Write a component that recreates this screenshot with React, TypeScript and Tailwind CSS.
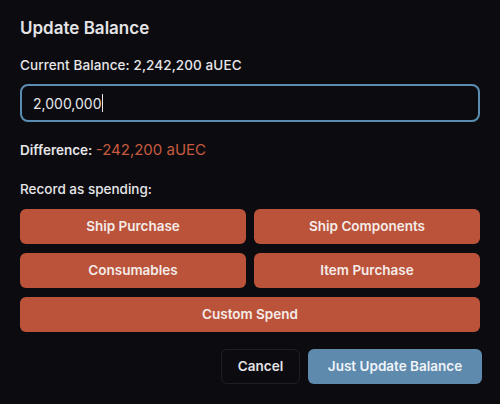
import React from "react";

const spendOptions = ["Ship Purchase", "Ship Components", "Consumables", "Item Purchase"];

export default function App() {
	return (
		<div
			className="w-[500px] h-[404px] bg-[#0c0c10] text-[#e6e6e8] px-5 pt-[17px]"
			style={{ fontFamily: "Inter, 'Liberation Sans', sans-serif" }}
		>
			<h2 className="text-[17px] font-semibold leading-[22px] text-[#e4e4e7]">Update Balance</h2>

			<div className="mt-[17px] text-[13.5px] font-medium leading-[18px] tracking-[0.1px]">
				Current Balance: 2,242,200 aUEC
			</div>

			<div className="mt-[10px] h-[38px] rounded-lg border-2 border-[#5a8db2] flex items-center px-[11px] text-[14px]">
				<span>2,000,000</span>
				<span className="w-px h-[18px] bg-[#e6e6e8]" />
			</div>

			<div className="mt-[19px] text-[13.5px] leading-[18px]">
				<span className="font-semibold">Difference: </span>
				<span className="text-[#c75a3e] text-[15px]">-242,200 aUEC</span>
			</div>

			<div className="mt-[21px] text-[13.5px] font-medium leading-[18px]">Record as spending:</div>

			<div className="mt-[11px] grid grid-cols-2 gap-x-2 gap-y-[9px]">
				{spendOptions.map((label) => (
					<button
						key={label}
						className="h-[35px] rounded-md bg-[#bb533a] text-[13.5px] font-semibold text-[#f4ece9]"
					>
						{label}
					</button>
				))}
				<button className="col-span-2 h-[35px] rounded-md bg-[#bb533a] text-[13.5px] font-semibold text-[#f4ece9]">
					Custom Spend
				</button>
			</div>

			<div className="mt-[17px] flex justify-end gap-2 pr-[18px] -mr-5">
				<button className="h-[35px] w-[79px] rounded-md border border-[#1f1f25] bg-[#0c0c10] text-[13.5px] font-semibold text-[#e4e4e7]">
					Cancel
				</button>
				<button className="h-[35px] w-[174px] rounded-md bg-[#5e8aad] text-[13.5px] font-semibold text-[#f0f4f8]">
					Just Update Balance
				</button>
			</div>
		</div>
	);
}
